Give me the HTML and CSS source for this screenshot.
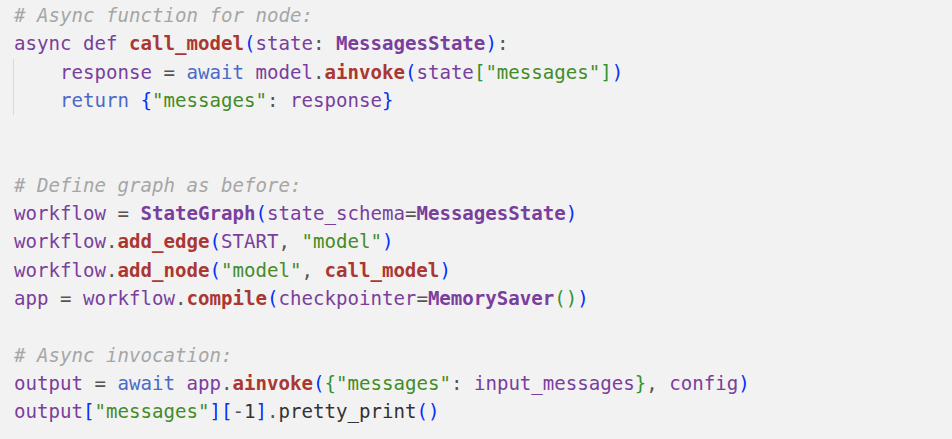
FILE: index.html
```html
<!DOCTYPE html>
<html>
<head>
<meta charset="utf-8">
<link rel="stylesheet" href="styles.css">
</head>
<body>
<div class="code">
<div class="ln"><span class="c"># Async function for node:</span></div>
<div class="ln"><span class="v">async def </span><span class="f">call_model</span><span class="b1">(</span><span class="v">state</span><span class="p">: </span><span class="t">MessagesState</span><span class="b1">)</span><span class="p">:</span></div>
<div class="guide">
<div class="ln">    <span class="v">response </span><span class="p">= </span><span class="k">await </span><span class="v">model</span><span class="p">.</span><span class="f">ainvoke</span><span class="b1">(</span><span class="v">state</span><span class="b2">[</span><span class="s">"messages"</span><span class="b2">]</span><span class="b1">)</span></div>
<div class="ln">    <span class="k">return </span><span class="b1">{</span><span class="s">"messages"</span><span class="p">: </span><span class="v">response</span><span class="b1">}</span></div>
</div>
<div class="ln"> </div>
<div class="ln"> </div>
<div class="ln"><span class="c"># Define graph as before:</span></div>
<div class="ln"><span class="v">workflow </span><span class="p">= </span><span class="t">StateGraph</span><span class="b1">(</span><span class="v">state_schema</span><span class="p">=</span><span class="t">MessagesState</span><span class="b1">)</span></div>
<div class="ln"><span class="v">workflow</span><span class="p">.</span><span class="f">add_edge</span><span class="b1">(</span><span class="v">START</span><span class="p">, </span><span class="s">"model"</span><span class="b1">)</span></div>
<div class="ln"><span class="v">workflow</span><span class="p">.</span><span class="f">add_node</span><span class="b1">(</span><span class="s">"model"</span><span class="p">, </span><span class="f">call_model</span><span class="b1">)</span></div>
<div class="ln"><span class="v">app </span><span class="p">= </span><span class="v">workflow</span><span class="p">.</span><span class="f">compile</span><span class="b1">(</span><span class="v">checkpointer</span><span class="p">=</span><span class="t">MemorySaver</span><span class="b2">()</span><span class="b1">)</span></div>
<div class="ln"> </div>
<div class="ln"><span class="c"># Async invocation:</span></div>
<div class="ln"><span class="v">output </span><span class="p">= </span><span class="k">await </span><span class="v">app</span><span class="p">.</span><span class="f">ainvoke</span><span class="b1">(</span><span class="b2">{</span><span class="s">"messages"</span><span class="p">: </span><span class="v">input_messages</span><span class="b2">}</span><span class="p">, </span><span class="v">config</span><span class="b1">)</span></div>
<div class="ln"><span class="v">output</span><span class="b1">[</span><span class="s">"messages"</span><span class="b1">][</span><span class="p">-</span><span class="n">1</span><span class="b1">]</span><span class="p">.</span><span class="n">pretty_print</span><span class="b1">()</span></div>
</div>
</body>
</html>
```
FILE: styles.css
```css
html, body {
  margin: 0;
  padding: 0;
  background: #f2f2f2;
}
.code {
  padding: 2px 14px 0 14px;
  font-family: "DejaVu Sans Mono", "Liberation Mono", monospace;
  font-size: 19.1px;
  line-height: 28.3px;
  color: #333333;
}
.ln {
  height: 28.3px;
  white-space: pre;
}
.guide {
  margin-left: -1px;
  border-left: 1px solid #d9d9d9;
}
.c { color: #a6a6a6; font-style: italic; }
.v { color: #7a3e9d; }
.k { color: #4b69c6; }
.f { color: #aa3731; font-weight: bold; }
.t { color: #7a3e9d; font-weight: bold; }
.s { color: #448c27; }
.p { color: #555555; }
.n { color: #333333; }
.b1 { color: #0431fa; }
.b2 { color: #319331; }
```
